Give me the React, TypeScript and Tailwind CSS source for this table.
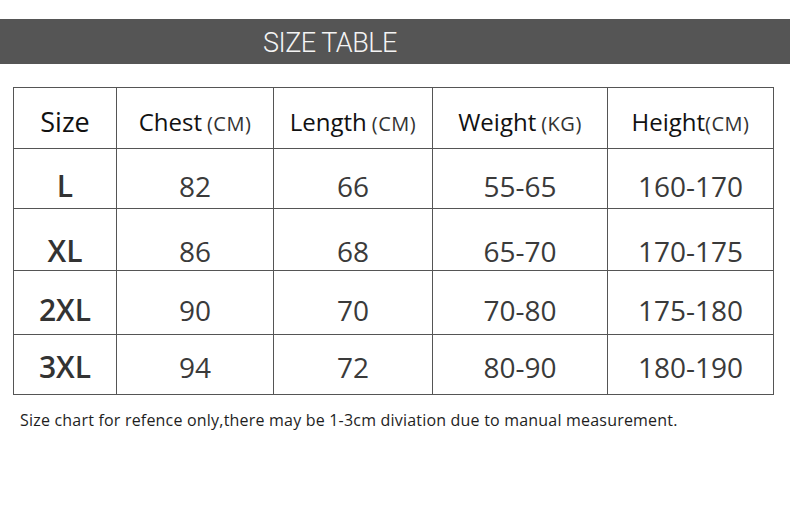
import React from "react";

const cols = ["w-[103px]", "w-[157px]", "w-[159px]", "w-[175px]", "w-[166px]"];

type Row = { h: string; pt: string; cells: string[] };

const rows: Row[] = [
  { h: "h-[60px]", pt: "pt-[14px]", cells: ["L", "82", "66", "55-65", "160-170"] },
  { h: "h-[62px]", pt: "pt-[22px]", cells: ["XL", "86", "68", "65-70", "170-175"] },
  { h: "h-[64px]", pt: "pt-[15px]", cells: ["2XL", "90", "70", "70-80", "175-180"] },
  { h: "h-[60px]", pt: "pt-[5px]", cells: ["3XL", "94", "72", "80-90", "180-190"] },
];

const headers: { main: string; unit?: string; gap?: boolean }[] = [
  { main: "Size" },
  { main: "Chest", unit: "(CM)", gap: true },
  { main: "Length", unit: "(CM)", gap: true },
  { main: "Weight", unit: "(KG)", gap: true },
  { main: "Height", unit: "(CM)", gap: false },
];

export default function App() {
  return (
    <div
      className="w-[790px] h-[522px] bg-white overflow-hidden"
      style={{ fontFamily: '"Open Sans", "Noto Sans", sans-serif' }}
    >
      <div className="mt-[19px] h-[45px] bg-[#555555] flex items-center pl-[263px]">
        <span
          className="text-[27px] font-light text-[#f4f4f4] leading-none tracking-[-0.5px] pt-[3px]"
          style={{ fontFamily: 'Roboto, "Open Sans", sans-serif' }}
        >
          SIZE TABLE
        </span>
      </div>

      <div className="ml-[13px] mt-[23px] w-[761px] border-l border-t border-[#555555]">
        <div className="flex h-[61px]">
          {headers.map((h, i) => (
            <div
              key={i}
              className={`${cols[i]} border-r border-b border-[#555555] flex items-center justify-center pt-[7px]`}
            >
              {i === 0 ? (
                <span className="text-[27px] text-[#111] leading-none">{h.main}</span>
              ) : (
                <span className="leading-none whitespace-nowrap">
                  <span className="text-[24px] text-[#111]">{h.main}</span>
                  <span className={`text-[20px] text-[#333] tracking-[0.5px] ${h.gap ? "ml-[5px]" : ""}`}>{h.unit}</span>
                </span>
              )}
            </div>
          ))}
        </div>
        {rows.map((r, ri) => (
          <div key={ri} className={`flex ${r.h}`}>
            {r.cells.map((c, ci) => (
              <div
                key={ci}
                className={`${cols[ci]} border-r border-b border-[#555555] flex items-center justify-center ${r.pt}`}
              >
                {ci === 0 ? (
                  <span className="text-[30px] font-semibold text-[#333] leading-none">{c}</span>
                ) : (
                  <span className="text-[28px] text-[#3a3a3a] leading-none">{c}</span>
                )}
              </div>
            ))}
          </div>
        ))}
      </div>

      <p className="ml-[20px] mt-[17px] text-[16px] tracking-[0.2px] text-[#1e1e1e] leading-none">
        Size chart for refence only,there may be 1-3cm diviation due to manual measurement.
      </p>
    </div>
  );
}
